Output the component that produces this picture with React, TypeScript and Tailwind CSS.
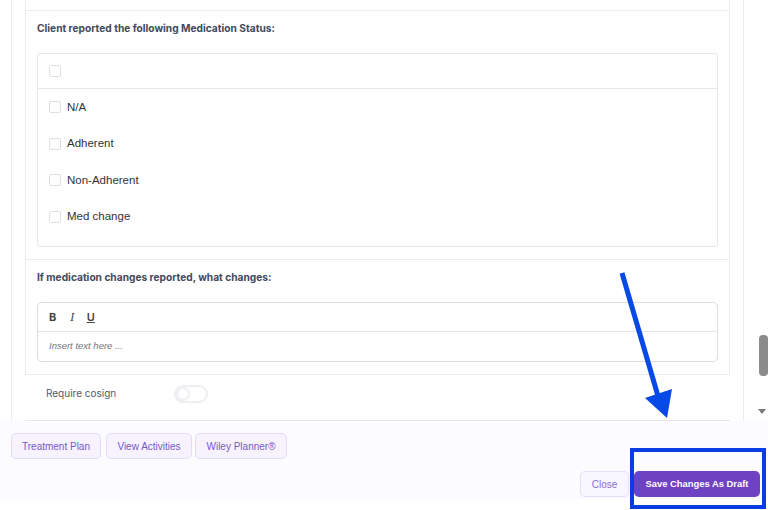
import React from "react";

const inter = { fontFamily: "Inter, 'Liberation Sans', sans-serif" };
const arial = { fontFamily: "'Liberation Sans', Arial, sans-serif" };

function Check() {
  return <span className="block w-[12px] h-[12px] rounded-[2px] border border-[#dcdfe5] bg-white shrink-0" />;
}

function Item({ label }: { label: string }) {
  return (
    <div className="h-[36.5px] flex items-center gap-[6px] pl-[11px]">
      <Check />
      <span className="text-[11.5px] text-[#333333] leading-none" style={arial}>{label}</span>
    </div>
  );
}

function PurpleBtn({ label, w }: { label: string; w: string }) {
  return (
    <button
      className={`h-[26px] ${w} rounded-[5px] border border-[#e4dcf8] bg-[#f6f3ff] text-[10px] text-[#7a56c8] flex items-center justify-center`}
      style={arial}
    >
      {label}
    </button>
  );
}

export default function App() {
  return (
    <div className="w-[768px] h-[510px] relative overflow-hidden bg-white">
      <div className="flex h-[421px]">
        <div className="w-[11px] shrink-0" />
        <div className="w-[733px] shrink-0 border-l border-r border-[#ebebf2] pl-[13px] flex flex-col">
          <div className="w-[705px] border-l border-r border-[#ebebf2] flex flex-col">
            <div className="h-[11px] border-b border-[#ebebf2]" />
            {/* Section 1 */}
            <div className="border-b border-[#ebebf2] pl-[11px] pt-[11px] pb-[12px]">
              <div className="text-[10.2px] leading-[12px] font-bold text-[#434a5c]" style={inter}>
                Client reported the following Medication Status:
              </div>
              <div className="mt-[19px] w-[681px] border border-[#e6e7eb] rounded-[3px]">
                <div className="h-[35px] border-b border-[#e6e7eb] flex items-center pl-[11px]">
                  <Check />
                </div>
                <div className="pb-[11px]">
                  <Item label="N/A" />
                  <Item label="Adherent" />
                  <Item label="Non-Adherent" />
                  <Item label="Med change" />
                </div>
              </div>
            </div>
            {/* Section 2 */}
            <div className="border-b border-[#ebebf2] pl-[11px] pt-[11px] pb-[12px]">
              <div className="text-[10.2px] leading-[12px] font-bold text-[#434a5c]" style={inter}>
                If medication changes reported, what changes:
              </div>
              <div className="mt-[19px] w-[681px] border border-[#dcdcdf] rounded-[5px]">
                <div className="h-[29px] border-b border-[#e3e3e6] flex items-center pl-[11px] text-[#444]">
                  <span className="text-[11px] font-bold leading-none" style={inter}>B</span>
                  <span className="ml-[14px] text-[11px] italic leading-none" style={{ fontFamily: "'DejaVu Serif', serif" }}>I</span>
                  <span className="ml-[12px] text-[11px] font-semibold underline leading-none" style={inter}>U</span>
                </div>
                <div className="h-[29px] flex items-center pl-[11px]">
                  <span className="text-[9.5px] italic text-[#6f7480]" style={arial}>Insert text here ...</span>
                </div>
              </div>
            </div>
          </div>
          <div className="h-[45px] flex items-center pl-[21px] pb-[8px]">
            <span className="text-[10px] text-[#555a66] w-[128px]" style={inter}>Require cosign</span>
            <span className="w-[34px] h-[18px] rounded-full border-2 border-[#eeeef3] bg-white flex items-center">
              <span className="w-[14px] h-[14px] rounded-full border-2 border-[#eeeef3] bg-white" />
            </span>
          </div>
          <div className="w-[705px] border-t border-[#e6e6f0]" />
        </div>
        <div className="flex-1 relative">
          <div className="absolute right-0 top-[335px] w-[9px] h-[41px] rounded-[4px] bg-[#8b8b8b]" />
          <div className="absolute right-[2px] top-[409px] w-0 h-0 border-l-[4px] border-r-[4px] border-t-[5px] border-l-transparent border-r-transparent border-t-[#7a7a7a]" />
        </div>
      </div>
      <div className="h-[78px] bg-[#fcfbff] px-[11px] pt-[12px] flex flex-col">
        <div className="flex">
          <PurpleBtn label="Treatment Plan" w="w-[90px]" />
          <div className="w-[5px]" />
          <PurpleBtn label="View Activities" w="w-[86px]" />
          <div className="w-[3px]" />
          <PurpleBtn label="Wiley Planner®" w="w-[92px]" />
        </div>
        <div className="flex justify-end gap-[5px] mt-[12px]">
          <button
            className="h-[26px] w-[49px] rounded-[5px] border border-[#e6def8] bg-[#f8f6ff] text-[10px] text-[#8a6cd2] flex items-center justify-center"
            style={arial}
          >
            Close
          </button>
          <button
            className="h-[26px] w-[126px] mr-[-3px] rounded-[5px] bg-[#6f42c1] text-[9.4px] font-bold text-white flex items-center justify-center"
            style={arial}
          >
            Save Changes As Draft
          </button>
        </div>
      </div>
      {/* annotation overlays */}
      <svg className="absolute left-0 top-0 pointer-events-none" width="768" height="510">
        <line x1="622" y1="273" x2="658" y2="396" stroke="#0649e6" strokeWidth="5" />
        <polygon points="645,398 672,389 667,418" fill="#0649e6" />
      </svg>
      <div className="absolute left-[630px] top-[448px] w-[136px] h-[61px] border-[4px] border-[#0a3de0] pointer-events-none" />
    </div>
  );
}
